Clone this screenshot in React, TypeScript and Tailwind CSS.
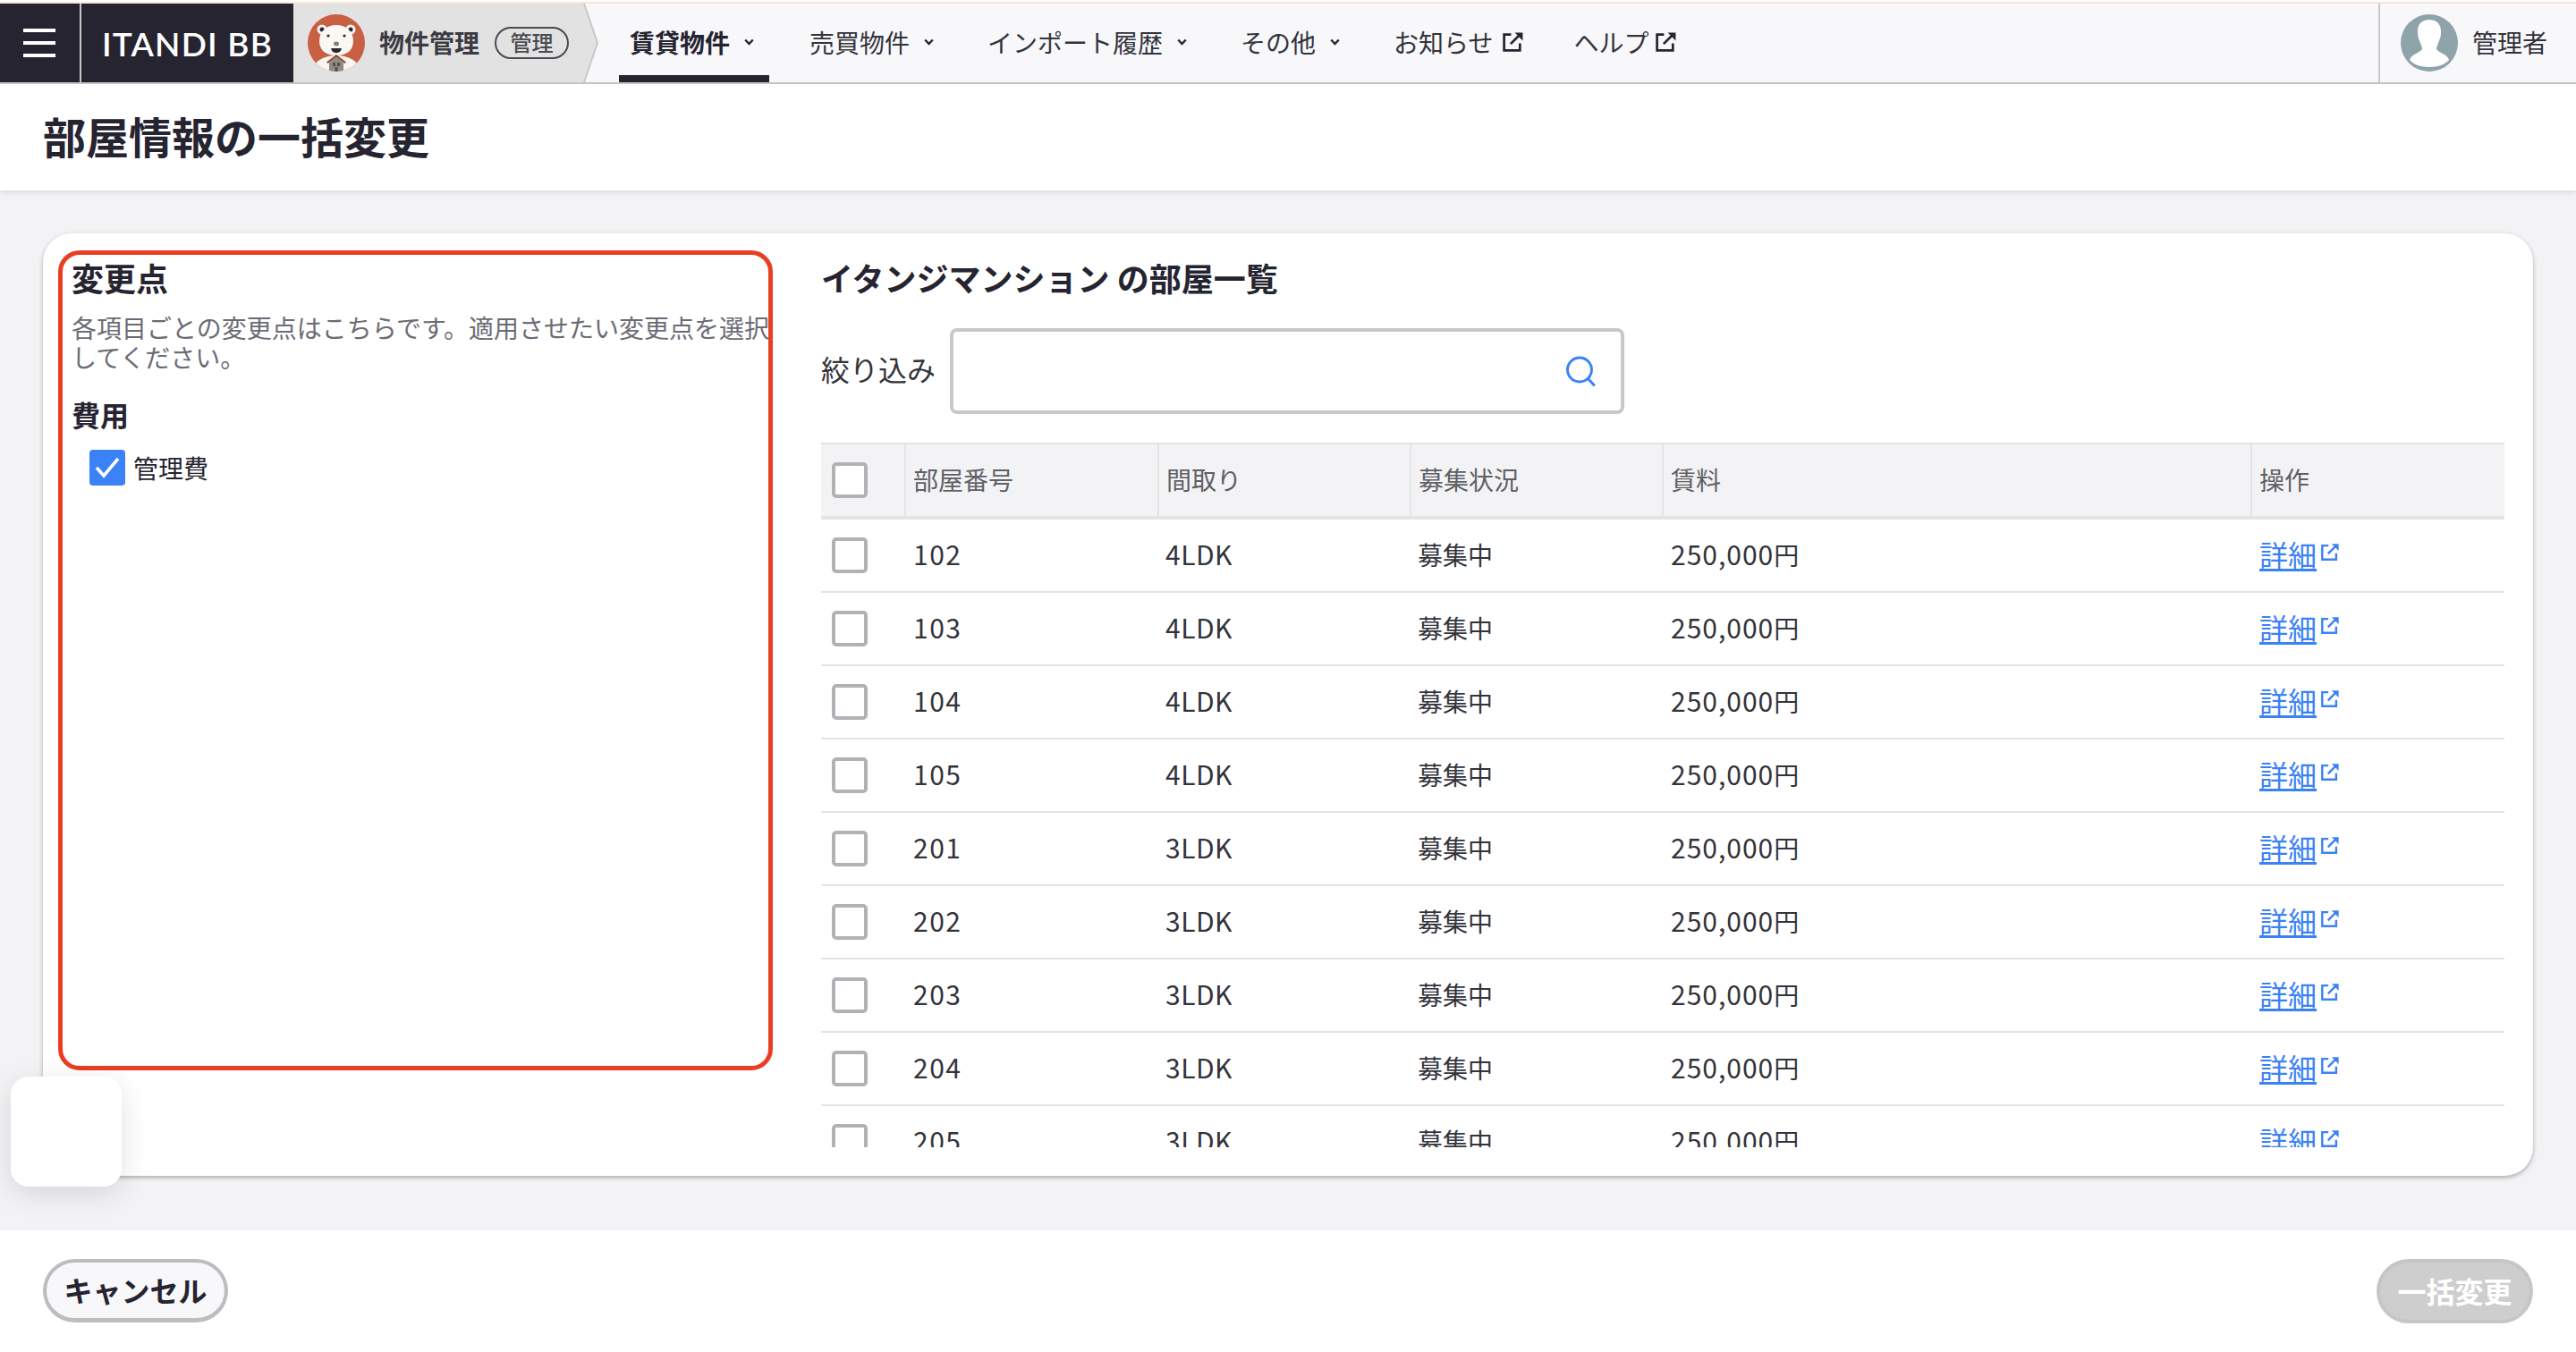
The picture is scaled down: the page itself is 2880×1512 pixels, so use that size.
const jp = 'font-["Noto_Sans_CJK_JP",sans-serif]'

const rooms = [
  ['102', '4LDK'],
  ['103', '4LDK'],
  ['104', '4LDK'],
  ['105', '4LDK'],
  ['201', '3LDK'],
  ['202', '3LDK'],
  ['203', '3LDK'],
  ['204', '3LDK'],
  ['205', '3LDK'],
]

const gridCols = 'grid grid-cols-[93px_283px_282px_282px_658px_284px]'

function BearLogo() {
  return (
    <svg width="64" height="64" viewBox="0 0 64 64" className="shrink-0">
      <defs>
        <clipPath id="bear-clip">
          <circle cx="32" cy="32" r="32" />
        </clipPath>
      </defs>
      <g clipPath="url(#bear-clip)">
        <rect width="64" height="64" fill="#c95f43" />
        <ellipse cx="32" cy="62" rx="26" ry="16" fill="#f7f6f0" />
        <circle cx="16" cy="17" r="5.5" fill="#f7f6f0" />
        <circle cx="48" cy="17" r="5.5" fill="#f7f6f0" />
        <circle cx="16" cy="17" r="2.5" fill="#2a2630" />
        <circle cx="48" cy="17" r="2.5" fill="#2a2630" />
        <path d="M13 30C13 19 21 12 32 12s19 7 19 18c0 9-6 16-19 16S13 39 13 30z" fill="#f9f8f2" />
        <circle cx="23" cy="24" r="1.6" fill="#2a2630" />
        <circle cx="41" cy="24" r="1.6" fill="#2a2630" />
        <ellipse cx="32" cy="33" rx="3" ry="2.4" fill="#8d7b70" />
        <path d="M26 38h12c-1 4-3 5-6 5s-5-1-6-5z" fill="#2a2630" />
        <path d="M32 45 21 53.5l1.5 1.5L32 48l9.5 7 1.5-1.5z" fill="#8a4a38" />
        <path d="M24 54l8-6 8 6v10H24z" fill="#8f8a86" />
        <rect x="28" y="54" width="3" height="4" fill="#5d4a44" />
        <rect x="33" y="54" width="3" height="4" fill="#5d4a44" />
        <rect x="30.5" y="59" width="3" height="5" fill="#5d4a44" />
      </g>
    </svg>
  )
}

function UserAvatar() {
  return (
    <svg width="64" height="64" viewBox="0 0 64 64" className="shrink-0">
      <defs>
        <clipPath id="avatar-clip">
          <circle cx="32" cy="32" r="32" />
        </clipPath>
      </defs>
      <g clipPath="url(#avatar-clip)">
        <rect width="64" height="64" fill="#8fa3ab" />
        <path
          d="M32 6c-8 0-13 5-13 13 0 2 0 5 1 8 1 2 1 3 2 5 1 3 2 5 2 7-1 2-4 3-7 5-4 2-6 4-7 7 4 5 12 8 22 8s18-3 22-8c-1-3-3-5-7-7-3-2-6-3-7-5 0-2 1-4 2-7 1-2 1-3 2-5 1-3 1-6 1-8 0-8-5-13-13-13z"
          fill="#ffffff"
        />
      </g>
    </svg>
  )
}

function Chevron() {
  return (
    <span className="ml-[9px] mr-[11px] flex w-[24px] justify-center">
      <svg width="11" height="8" viewBox="0 0 11 8" fill="none">
        <path d="M1.2 1.5 5.5 6l4.3-4.5" stroke="#252430" strokeWidth="2.4" />
      </svg>
    </span>
  )
}

function ExternalIcon({ color, size }: { color: string; size: number }) {
  return (
    <svg width={size} height={size} viewBox="0 0 24 24" fill="none" stroke={color} strokeWidth="2.6">
      <path d="M10 4.5H2.5v17h17V14" />
      <path d="M9.5 14.5 19 5" />
      <path d="M14 2.5h8.5V11z" fill={color} stroke="none" />
    </svg>
  )
}

function Checkbox() {
  return <span className="block h-[40px] w-[40px] rounded-[5px] border-[4px] border-[#b2b2b6] bg-white" />
}

function NavBar() {
  return (
    <nav className="flex h-[90px] shrink-0 border-b-2 border-[#c8c8c8] bg-[#f8f8fb]">
      <div className="flex w-[89px] flex-col items-start justify-center gap-[10px] bg-[#252430] pl-[26px]">
        <span className="h-[4px] w-[36px] bg-white" />
        <span className="h-[4px] w-[36px] bg-white" />
        <span className="h-[4px] w-[36px] bg-white" />
      </div>
      <div className="flex w-[239px] items-center border-l-2 border-[#c8c8c8] bg-[#252430] pl-[23px]">
        <span className='font-["Lato",sans-serif] text-[37px] font-semibold leading-none tracking-[1.2px] text-white whitespace-nowrap'>
          ITANDI BB
        </span>
      </div>
      <div className="relative flex w-[325px] items-center bg-[#e2e2e2] pl-[16px]">
        <BearLogo />
        <span className="ml-[16px] pb-[3px] text-[28px] font-bold text-[#3a3a42] whitespace-nowrap">物件管理</span>
        <span className="ml-[17px] flex h-[36px] w-[83px] items-center justify-center rounded-full border-2 border-[#4a4a52] pb-[2px] text-[24px] font-medium leading-none text-[#4a4a52] whitespace-nowrap">
          管理
        </span>
        <svg className="absolute left-[324px] top-0 h-[88px] w-[18px]" viewBox="0 0 18 88">
          <path d="M0 0 16 44 0 88z" fill="#e2e2e2" />
          <path d="M1 0 16 44 1 88" fill="none" stroke="#c8c8c8" strokeWidth="2" />
        </svg>
      </div>
      <div className="flex flex-1 gap-[31px] pl-[39px] text-[28px] text-[#33333b] whitespace-nowrap">
        <a className="mr-[2px] flex items-center border-b-[8px] border-[#252430] pl-[12px] pt-[5px] font-bold text-[#252430]">
          賃貸物件
          <Chevron />
        </a>
        {['売買物件', 'インポート履歴', 'その他'].map((label) => (
          <a key={label} className="flex items-center pb-[3px] pl-[12px]">
            {label}
            <Chevron />
          </a>
        ))}
        <a className="flex items-center gap-[9px] pb-[3px] pl-[12px]">
          お知らせ
          <ExternalIcon color="#252430" size={25} />
        </a>
        <a className="ml-[25px] flex items-center gap-[6px] pb-[3px]">
          ヘルプ
          <ExternalIcon color="#252430" size={25} />
        </a>
      </div>
      <div className="flex w-[221px] items-center border-l-2 border-[#c8c8c8] pl-[23px]">
        <UserAvatar />
        <span className="ml-[16px] pb-[3px] text-[28px] text-[#33333b] whitespace-nowrap">管理者</span>
      </div>
    </nav>
  )
}

function RoomTable() {
  return (
    <div className="mt-[32px] min-h-0 flex-1 overflow-hidden">
      <div className={`${gridCols} h-[86px] border-t-2 border-b-4 border-[#e4e4e5] bg-[#f3f3f5] text-[28px] text-[#5f5f66]`}>
        <div className="flex items-center pl-[12px]">
          <Checkbox />
        </div>
        {['部屋番号', '間取り', '募集状況', '賃料', '操作'].map((label) => (
          <div key={label} className="flex items-center border-l-2 border-[#e4e4e5] pb-[3px] pl-[8px]">
            {label}
          </div>
        ))}
      </div>
      {rooms.map(([no, plan]) => (
        <div key={no} className={`${gridCols} h-[82px] border-b-2 border-[#e4e4e5] text-[28px] text-[#33333b]`}>
          <div className="flex items-center pl-[12px]">
            <Checkbox />
          </div>
          <div className="flex items-center pb-[3px] pl-[10px] text-[30px] tracking-[1.5px]">{no}</div>
          <div className="flex items-center pb-[3px] pl-[9px] text-[30px] tracking-[0.5px]">{plan}</div>
          <div className="flex items-center pb-[3px] pl-[9px]">募集中</div>
          <div className="flex items-center pb-[3px] pl-[10px]">
            <span className="text-[30px] tracking-[1px]">250,000</span>円
          </div>
          <div className="flex items-center gap-[4px] pb-[4px] pl-[10px]">
            <a className="text-[32px] leading-none text-[#3b82f6] underline decoration-[3px] underline-offset-[3px]">詳細</a>
            <span className="mb-[4px]">
              <ExternalIcon color="#3b82f6" size={22} />
            </span>
          </div>
        </div>
      ))}
    </div>
  )
}

export default function App() {
  return (
    <div className={`flex h-[1512px] w-full flex-col overflow-hidden bg-[#f3f3f5] ${jp}`}>
      <div className="h-[4px] shrink-0 bg-white pt-[2px]">
        <div className="h-[2px] bg-[#f8e4d8]" />
      </div>
      <NavBar />
      <header className="z-10 flex h-[119px] shrink-0 items-center bg-white pb-[6px] pl-[48px] shadow-[0_2px_6px_rgba(0,0,0,0.1)]">
        <h1 className="text-[48px] font-bold leading-none text-[#252430] whitespace-nowrap">部屋情報の一括変更</h1>
      </header>

      <main className="relative flex-1 px-[48px] pt-[48px]">
        <div className="flex h-[1054px] rounded-[32px] bg-white pl-[17px] pr-[32px] pt-[19px] shadow-[0_2px_5px_rgba(0,0,0,0.3)]">
          <section className="h-[917px] w-[799px] shrink-0 rounded-[24px] border-[5px] border-[#ea3e23] pl-[10px] pt-[6px] text-[#252430]">
            <h2 className="text-[36px] font-bold leading-[38px]">変更点</h2>
            <p className="mt-[21px] text-[28px] leading-[33px] text-[#6b6b75] whitespace-nowrap">
              各項目ごとの変更点はこちらです。適用させたい変更点を選択
              <br />
              してください。
            </p>
            <h3 className="mt-[29px] text-[32px] font-bold leading-[36px]">費用</h3>
            <label className="mt-[22px] ml-[20px] flex items-center gap-[9px] text-[28px] leading-none">
              <span className="flex h-[40px] w-[40px] items-center justify-center rounded-[4px] bg-[#3b82f6]">
                <svg width="30" height="26" viewBox="0 0 30 26" fill="none">
                  <path d="M3 13l8 9L27 3" stroke="#ffffff" strokeWidth="3.5" />
                </svg>
              </span>
              <span className="pb-[1px]">管理費</span>
            </label>
          </section>

          <section className="ml-[54px] flex h-[1003px] min-w-0 flex-1 flex-col">
            <h2 className="mt-[12px] text-[36px] font-bold leading-[36px] text-[#252430] whitespace-nowrap">
              イタンジマンション の部屋一覧
            </h2>
            <div className="mt-[39px] flex items-center gap-[17px]">
              <span className="w-[127px] pb-[7px] text-[32px] text-[#33333b] whitespace-nowrap">絞り込み</span>
              <div className="flex h-[96px] w-[754px] items-center justify-end rounded-[8px] border-[4px] border-[#c8c8ca] pr-[28px]">
                <svg width="34" height="34" viewBox="0 0 34 34" fill="none" stroke="#3b82f6" strokeWidth="3">
                  <circle cx="16" cy="15.5" r="13.5" />
                  <path d="M25.5 25.5l6.5 7" strokeLinecap="round" />
                </svg>
              </div>
            </div>
            <RoomTable />
          </section>
        </div>
        <div className="absolute left-[12px] top-[991px] h-[123px] w-[124px] rounded-[20px] bg-white shadow-[0_8px_32px_rgba(0,0,0,0.12)]" />
      </main>

      <footer className="flex h-[136px] shrink-0 items-start justify-between bg-white px-[48px] pt-[32px]">
        <button className="h-[71px] w-[207px] rounded-full border-[4px] border-b-[5px] border-[#bdbdc0] bg-[#f8f8fb] pb-[3px] text-[32px] font-bold leading-none text-[#252430] whitespace-nowrap">
          キャンセル
        </button>
        <button className="h-[72px] w-[175px] rounded-full border-[4px] border-[#c6c6c8] bg-[#cecece] pb-[3px] text-[32px] font-bold leading-none text-white whitespace-nowrap">
          一括変更
        </button>
      </footer>
    </div>
  )
}
